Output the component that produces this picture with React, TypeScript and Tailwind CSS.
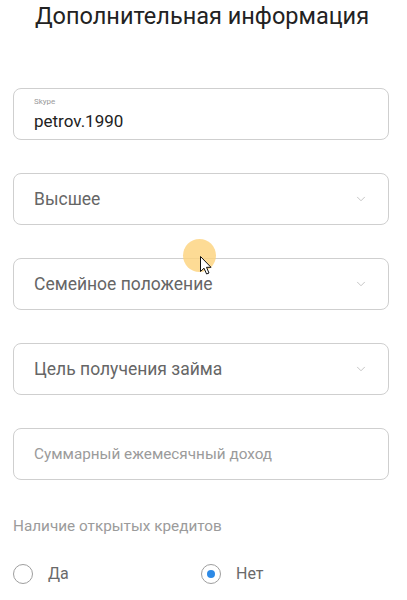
import { ChevronDown } from "lucide-react";

const font = { fontFamily: "Roboto, 'Noto Sans', sans-serif" };

function SelectBox({ label }: { label: string }) {
  return (
    <div className="flex h-[52px] items-center justify-between rounded-[8px] border border-[#cfcfcf] bg-white pl-[20px] pr-[20px]">
      <span className="text-[17.5px] text-[#666]">{label}</span>
      <ChevronDown className="size-[14px] text-[#bdbdbd]" strokeWidth={1.5} />
    </div>
  );
}

function Radio({ label, checked }: { label: string; checked?: boolean }) {
  return (
    <label className="flex items-center gap-[15px]">
      <span className="flex size-[20px] items-center justify-center rounded-full border-[1.5px] border-[#9e9e9e]">
        {checked && <span className="size-[8px] rounded-full bg-[#2d8ae6]" />}
      </span>
      <span className="text-[16px] text-[#6a6a6a]">{label}</span>
    </label>
  );
}

export default function App() {
  return (
    <div className="relative h-[600px] w-[407px] overflow-hidden bg-white" style={font}>
      <h1 className="mt-[1px] w-[404px] text-center text-[23.5px] leading-[30px] font-normal text-[#222]">
        Дополнительная информация
      </h1>

      <div className="mt-[57px] ml-[13px] flex w-[376px] flex-col gap-[33px]">
        <div className="flex h-[52px] flex-col justify-center rounded-[8px] border border-[#cfcfcf] bg-white pl-[20px]">
          <span className="text-[8px] leading-[10px] text-[#9a9a9a]">Skype</span>
          <span className="mt-[4px] text-[17px] leading-[20px] text-[#222]">petrov.1990</span>
        </div>
        <SelectBox label="Высшее" />
        <SelectBox label="Семейное положение" />
        <SelectBox label="Цель получения займа" />
        <div className="flex h-[52px] items-center rounded-[8px] border border-[#cfcfcf] bg-white pl-[20px]">
          <span className="text-[15.3px] text-[#9b9b9b]">Суммарный ежемесячный доход</span>
        </div>
      </div>

      <p className="mt-[35px] ml-[13px] text-[15.3px] leading-[22px] text-[#9b9b9b]">
        Наличие открытых кредитов
      </p>

      <div className="mt-[25px] ml-[13px] grid w-[376px] grid-cols-2">
        <Radio label="Да" />
        <Radio label="Нет" checked />
      </div>

      {/* mouse pointer highlight */}
      <div className="pointer-events-none absolute top-[239px] left-[183px] size-[33px] rounded-full bg-[#fcd27a]/80" />
      <svg
        className="pointer-events-none absolute top-[256px] left-[200px]"
        width="13"
        height="19"
        viewBox="0 0 13 19"
      >
        <path
          d="M0.5 0.5 L0.5 15.5 L4 12.2 L6.6 18 L9 17 L6.5 11.3 L11 11.3 Z"
          fill="#fff"
          stroke="#111"
          strokeWidth="1"
          strokeLinejoin="round"
        />
      </svg>
    </div>
  );
}
